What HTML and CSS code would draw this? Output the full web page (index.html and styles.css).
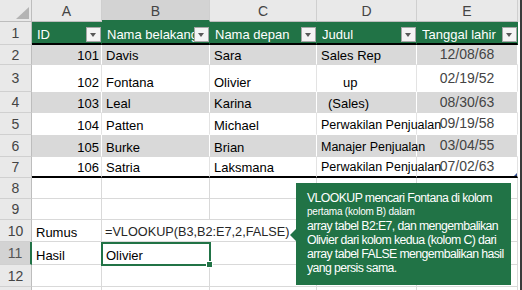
FILE: index.html
```html
<!DOCTYPE html>
<html>
<head>
<meta charset="utf-8">
<link rel="stylesheet" href="styles.css">
</head>
<body>
<div class="sheet">
  <div class="row hdr">
    <div class="rh corner"><svg width="13" height="12" viewBox="0 0 13 12"><polygon points="13,0 13,12 0,12" fill="#b4b4b4"/></svg></div>
    <div class="c ca ch">A</div>
    <div class="c cb ch sel">B</div>
    <div class="c cc ch">C</div>
    <div class="c cd ch">D</div>
    <div class="c ce ch">E</div>
    <div class="edge ehdr"></div>
  </div>
  <div class="row r1">
    <div class="rh">1</div>
    <div class="c ca th"><span class="tt">ID</span><span class="dd"></span></div>
    <div class="c cb th"><span class="tt">Nama belakang</span><span class="dd"></span></div>
    <div class="c cc th"><span class="tt">Nama depan</span><span class="dd"></span></div>
    <div class="c cd th"><span class="tt">Judul</span><span class="dd"></span></div>
    <div class="c ce th"><span class="tt">Tanggal lahir</span><span class="dd"></span></div>
    <div class="edge"></div>
  </div>
  <div class="row r2 band">
    <div class="rh">2</div>
    <div class="c ca num">101</div>
    <div class="c cb">Davis</div>
    <div class="c cc">Sara</div>
    <div class="c cd">Sales Rep</div>
    <div class="c ce date">12/08/68</div>
    <div class="edge"></div>
  </div>
  <div class="row r3 plain">
    <div class="rh">3</div>
    <div class="c ca num">102</div>
    <div class="c cb">Fontana</div>
    <div class="c cc">Olivier</div>
    <div class="c cd ind-up">up</div>
    <div class="c ce date">02/19/52</div>
    <div class="edge"></div>
  </div>
  <div class="row r4 band">
    <div class="rh">4</div>
    <div class="c ca num">103</div>
    <div class="c cb">Leal</div>
    <div class="c cc">Karina</div>
    <div class="c cd ind-sales">(Sales)</div>
    <div class="c ce date">08/30/63</div>
    <div class="edge"></div>
  </div>
  <div class="row r5 plain">
    <div class="rh">5</div>
    <div class="c ca num">104</div>
    <div class="c cb">Patten</div>
    <div class="c cc">Michael</div>
    <div class="c cd small">Perwakilan Penjualan</div>
    <div class="c ce date">09/19/58</div>
    <div class="edge"></div>
  </div>
  <div class="row r6 band">
    <div class="rh">6</div>
    <div class="c ca num">105</div>
    <div class="c cb">Burke</div>
    <div class="c cc">Brian</div>
    <div class="c cd small">Manajer Penjualan</div>
    <div class="c ce date">03/04/55</div>
    <div class="edge"></div>
  </div>
  <div class="row r7 plain last">
    <div class="rh">7</div>
    <div class="c ca num">106</div>
    <div class="c cb">Satria</div>
    <div class="c cc">Laksmana</div>
    <div class="c cd small">Perwakilan Penjualan</div>
    <div class="c ce date resize">07/02/63</div>
    <div class="edge"></div>
  </div>
  <div class="row r8 grid">
    <div class="rh">8</div>
    <div class="c ca"></div>
    <div class="c cb"></div>
    <div class="c cc"></div>
    <div class="c cd"></div>
    <div class="c ce"></div>
    <div class="edge"></div>
  </div>
  <div class="row r9 grid">
    <div class="rh">9</div>
    <div class="c ca"></div>
    <div class="c cb"></div>
    <div class="c cc"></div>
    <div class="c cd"></div>
    <div class="c ce"></div>
    <div class="edge"></div>
  </div>
  <div class="row r10 grid">
    <div class="rh">10</div>
    <div class="c ca">Rumus</div>
    <div class="c cbcd formula">=VLOOKUP(B3,B2:E7,2,FALSE)</div>
    <div class="c ce"></div>
    <div class="edge"></div>
  </div>
  <div class="row r11 grid">
    <div class="rh rsel">11</div>
    <div class="c ca">Hasil</div>
    <div class="c cb active">Olivier<span class="handle"></span></div>
    <div class="c cc"></div>
    <div class="c cd"></div>
    <div class="c ce"></div>
    <div class="edge"></div>
  </div>
  <div class="row r12 grid">
    <div class="rh">12</div>
    <div class="c ca"></div>
    <div class="c cb"></div>
    <div class="c cc"></div>
    <div class="c cd"></div>
    <div class="c ce"></div>
    <div class="edge"></div>
  </div>
  <div class="row r13 grid">
    <div class="rh"></div>
    <div class="c ca"></div>
    <div class="c cb"></div>
    <div class="c cc"></div>
    <div class="c cd"></div>
    <div class="c ce"></div>
    <div class="edge"></div>
  </div>

  <div class="callout">
    <div class="cl">VLOOKUP mencari Fontana di kolom</div>
    <div class="cl cl-small">pertama (kolom B) dalam</div>
    <div class="cl">array tabel B2:E7, dan mengembalikan</div>
    <div class="cl">Olivier dari kolom kedua (kolom C) dari</div>
    <div class="cl">array tabel FALSE mengembalikan hasil</div>
    <div class="cl">yang persis sama.</div>
  </div>
</div>
</body>
</html>
```

FILE: styles.css
```css
* { box-sizing: border-box; }
html, body { margin: 0; padding: 0; background: #fff; }
body {
  font-family: "Liberation Sans", Arial, sans-serif;
  font-size: 13px;
  color: #000;
}
.sheet {
  position: relative;
  width: 522px;
  height: 290px;
  overflow: hidden;
  background: #fff;
}
.row { display: flex; }

.hdr { height: 22px; }
.r1 { height: 23px; }
.r2 { height: 20px; }
.r3 { height: 27px; }
.r4 { height: 21px; }
.r5 { height: 22px; }
.r6 { height: 22px; }
.r7 { height: 21px; }
.r8 { height: 21px; }
.r9 { height: 21px; }
.r10 { height: 22px; }
.r11 { height: 23px; }
.r12 { height: 22px; }
.r13 { height: 10px; }

/* row header */
.rh {
  flex: none;
  width: 32px;
  background: #e9e9e9;
  border-right: 1px solid #bdbdbd;
  border-bottom: 1px solid #d0d0d0;
  color: #444;
  font-size: 14px;
  display: flex;
  align-items: center;
  justify-content: center;
}
.rh.rsel {
  background: #d3d3d3;
  border-right: 2px solid #217346;
  color: #555;
}
.corner {
  justify-content: flex-end;
  align-items: flex-end;
  padding: 0 2px 2px 0;
  border-bottom: 1px solid #bdbdbd;
}

/* cells */
.c {
  flex: none;
  display: flex;
  align-items: flex-end;
  padding: 0 4px 1px 4px;
  line-height: 15px;
  white-space: nowrap;
  border-right: 1px solid #d9d9d9;
  border-bottom: 1px solid #d9d9d9;
}
.ca { width: 70px; }
.cb { width: 108px; }
.cc { width: 107px; }
.cd { width: 100px; }
.ce { width: 101px; }
.cbcd { width: 315px; }

.edge {
  flex: none;
  width: 4px;
  background: #fff;
  border-right: 2px solid #3a3a3a;
}
.ehdr { background: #e9e9e9; }

/* column headers */
.ch {
  background: #e9e9e9;
  border-right: 1px solid #cfcfcf;
  border-bottom: 1px solid #bdbdbd;
  justify-content: center;
  align-items: center;
  padding: 2px 0 0 0;
  font-size: 14px;
  color: #444;
}
.ch.sel {
  background: #d3d3d3;
  border-bottom: 2px solid #217346;
}

/* table header row */
.th {
  background: #217346;
  color: #fff;
  border-right: 1px solid #217346;
  border-bottom: 2px solid #000;
  padding: 0 0 0 5px;
}
.tt {
  flex: 1 1 auto;
  min-width: 0;
  overflow: hidden;
  padding-bottom: 1px;
}
.dd {
  flex: none;
  width: 15px;
  height: 15px;
  margin-bottom: 1px;
  background: #f4f4f4;
  border: 1px solid #a6a6a6;
  position: relative;
}
.dd::after {
  content: "";
  position: absolute;
  left: 3px;
  top: 5px;
  border-left: 3.5px solid transparent;
  border-right: 3.5px solid transparent;
  border-top: 4px solid #595959;
}

/* banded rows */
.band .c { background: #d9d9d9; border-right-color: #fff; border-bottom-color: #d9d9d9; }
.plain .c { background: #fff; border-right-color: #e3e3e3; border-bottom-color: #fff; }
.last .c { border-bottom: 2px solid #000; }

.num { justify-content: flex-end; padding-right: 2px; }
.date {
  justify-content: center;
  align-items: center;
  font-size: 14px;
  color: #444;
  padding: 0;
}
.small {
  font-size: 12.5px;
  position: relative;
  z-index: 1;
}
.ind-up { padding-left: 26px; }
.ind-sales { padding-left: 11px; }

.formula { color: #262626; font-size: 12.7px; padding-left: 3px; }

.active { position: relative; }
.active::after {
  content: "";
  position: absolute;
  left: -1px;
  right: -2px;
  top: 0;
  bottom: -2px;
  border: 2px solid #217346;
}
.handle {
  position: absolute;
  right: -3px;
  bottom: -3px;
  width: 5px;
  height: 5px;
  background: #217346;
  box-shadow: 0 0 0 1px #fff;
  z-index: 2;
}
.resize { position: relative; }
.resize::after {
  content: "";
  position: absolute;
  right: 0;
  bottom: 0;
  border-left: 3px solid transparent;
  border-bottom: 3px solid #2e4a8a;
}

/* callout */
.callout {
  position: absolute;
  z-index: 3;
  left: 296px;
  top: 183px;
  width: 215px;
  height: 102px;
  background: #217346;
  color: #fff;
  padding: 8px 0 0 11px;
  font-size: 12.3px;
  letter-spacing: -0.6px;
}
.callout::before {
  content: "";
  position: absolute;
  left: -6px;
  top: 46px;
  border-top: 6px solid transparent;
  border-bottom: 6px solid transparent;
  border-right: 6px solid #217346;
}
.cl { line-height: 14px; white-space: nowrap; }
.cl-small { font-size: 10px; letter-spacing: -0.2px; }
```
